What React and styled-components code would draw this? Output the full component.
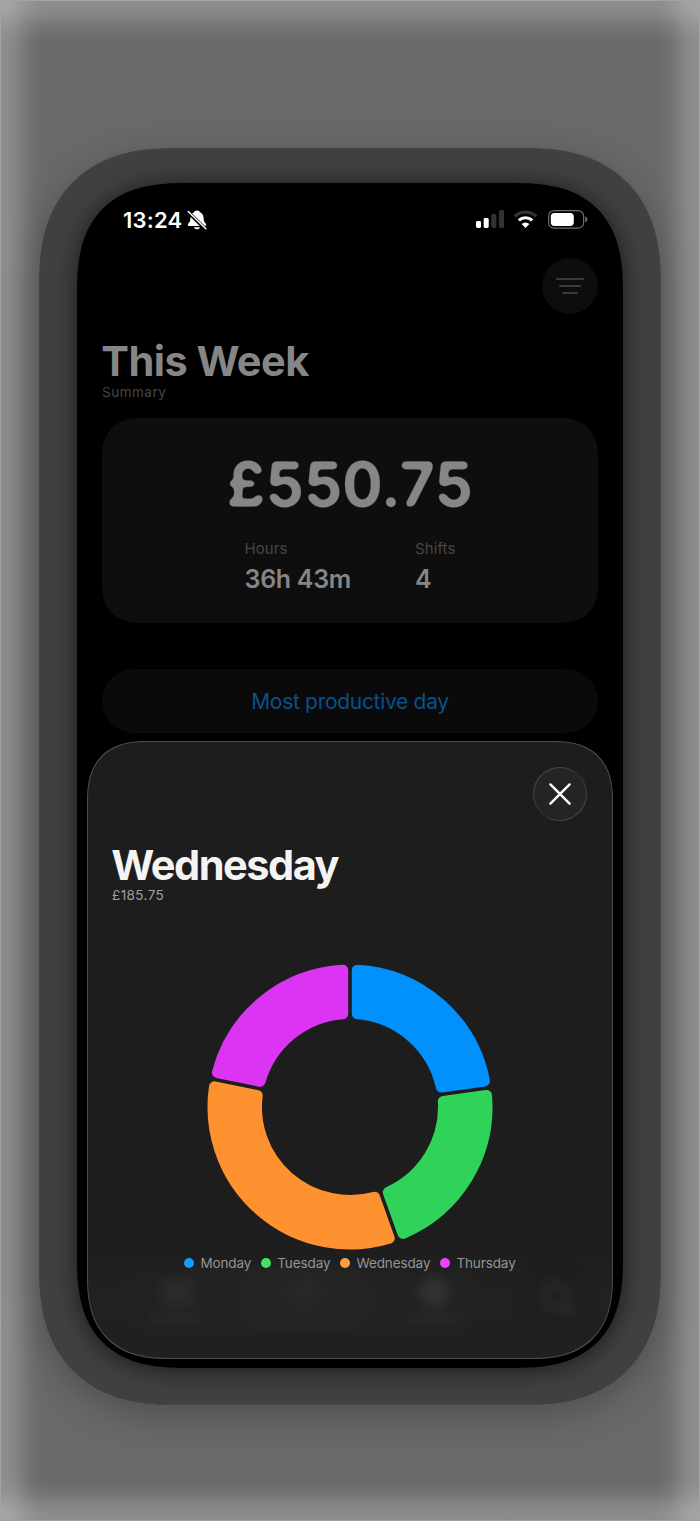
import React from 'react';
import styled, { createGlobalStyle } from 'styled-components';

const GlobalStyle = createGlobalStyle`
  * { box-sizing: border-box; }
  body {
    margin: 0;
    background: #696969;
    font-family: Inter, "Liberation Sans", sans-serif;
  }
`;

const glow = `rgba(255, 255, 255, 0.2) 0, rgba(255, 255, 255, 0.19) 8px,
  rgba(255, 255, 255, 0.16) 14px, rgba(255, 255, 255, 0.115) 20px,
  rgba(255, 255, 255, 0.07) 26px, rgba(255, 255, 255, 0.035) 32px,
  rgba(255, 255, 255, 0.012) 39px, rgba(255, 255, 255, 0) 48px`;

const Backdrop = styled.div`
  width: 700px;
  height: 1521px;
  padding: 147px 38.5px 0 38px;
  border: 1px solid #a3a3a3;
  box-shadow: inset 0 0 30px 16px rgba(255, 255, 255, 0.07);
  background:
    linear-gradient(to right, ${glow}),
    linear-gradient(to left, ${glow}),
    linear-gradient(to bottom, ${glow}),
    linear-gradient(to top, ${glow}),
    #696969;
`;

const Frame = styled.div`
  height: 1257px;
  padding: 34.5px 37.5px;
  border-radius: 112px;
  background: #404040;
  box-shadow: 0 10px 34px rgba(0, 0, 0, 0.25), inset 0 0 1px rgba(255, 255, 255, 0.3);
  @supports (corner-shape: squircle) {
    border-radius: 130px;
    corner-shape: superellipse(1.2);
  }
`;

const Screen = styled.div`
  display: flex;
  flex-direction: column;
  height: 1185.5px;
  border-radius: 84px;
  background: #000;
  box-shadow: 0 2px 22px 1px rgba(0, 0, 0, 0.55);
  @supports (corner-shape: squircle) {
    border-radius: 110px;
    corner-shape: superellipse(1.38);
  }
`;

const StatusBar = styled.div`
  display: flex;
  align-items: center;
  height: 74px;
  padding: 0 35.5px 0 46.5px;
`;

const Time = styled.span`
  margin-right: 5px;
  color: #fff;
  font-size: 22px;
  font-weight: 600;
  letter-spacing: 0.2px;
`;

const StatusIcons = styled.div`
  display: flex;
  align-items: center;
  margin: 0 0 1px auto;
  gap: 9.5px;
`;

const Nav = styled.div`
  display: flex;
  justify-content: flex-end;
  padding: 1px 25px 0;
`;

const FilterButton = styled.button`
  display: flex;
  align-items: center;
  justify-content: center;
  width: 56px;
  height: 56px;
  padding: 0;
  border: 0;
  border-radius: 50%;
  background: #0d0d0d;
`;

const Header = styled.div`
  padding: 22px 25.5px 0;
`;

const Title = styled.h1`
  margin: 0 0 0 -0.7px;
  font-size: 41.5px;
  line-height: 50px;
  font-weight: 700;
  letter-spacing: ${(p) => p.$spacing};
  color: ${(p) => p.$color};
`;

const Subtitle = styled.div`
  margin-top: -2px;
  font-size: 13.5px;
  line-height: 16px;
  letter-spacing: ${(p) => p.$spacing};
  color: ${(p) => p.$color};
`;

const Card = styled.div`
  display: flex;
  flex-direction: column;
  align-items: center;
  height: 205px;
  margin: 18px 25px 0 25.5px;
  padding-top: 32px;
  border-radius: 34px;
  background: #0e0e0f;
  @supports (corner-shape: squircle) {
    border-radius: 38px;
    corner-shape: superellipse(1.2);
  }
`;

// the filter rounds off the ends of the digits
const Amount = styled.div`
  font-size: 60.5px;
  line-height: 68px;
  font-weight: 600;
  letter-spacing: 0.5px;
  color: #868686;
  filter: url(#rounded);
`;

const FilterDefs = styled.svg`
  position: absolute;
`;

const Stats = styled.div`
  display: flex;
  gap: 64px;
  margin-top: 21.5px;
`;

const StatLabel = styled.div`
  font-size: 15px;
  line-height: 20px;
  letter-spacing: 0.1px;
  color: #464647;
`;

const StatValue = styled.div`
  margin-top: 4.5px;
  font-size: 25px;
  line-height: 30px;
  font-weight: 600;
  letter-spacing: -0.3px;
  color: #868686;
`;

const Pill = styled.button`
  height: 64px;
  margin: 46px 25px 0 25.5px;
  padding: 1px 0 0;
  border: 0;
  border-radius: 32px;
  background: #0a0a0a;
  font-family: inherit;
  font-size: 21px;
  letter-spacing: -0.3px;
  color: #07518d;
`;

const Sheet = styled.div`
  position: relative;
  display: flex;
  flex-direction: column;
  height: 618px;
  margin: 8px 10px 0 10.5px;
  padding: 25px 24px 0;
  border: 1px solid #4c4c4c;
  border-radius: 48px 48px 64px 64px;
  background: linear-gradient(#1d1d1d 0, #1d1d1d 500px, #212121 550px, #202020 100%);
  overflow: hidden;
  @supports (corner-shape: squircle) {
    border-radius: 60px 60px 82px 82px;
    corner-shape: superellipse(1.3);
  }
`;

const CloseButton = styled.button`
  position: relative;
  display: flex;
  align-items: center;
  justify-content: center;
  align-self: flex-end;
  width: 54px;
  height: 54px;
  margin-right: 1px;
  padding: 0;
  border: 1px solid transparent;
  border-radius: 50%;
  background:
    linear-gradient(#242426, #242426) padding-box,
    linear-gradient(135deg, #58585b, #343437 50%, #58585b) border-box;
`;

const SheetHeader = styled.div`
  position: relative;
  margin-top: 19px;
  ${Subtitle} { margin-top: -3px; }
`;

const Chart = styled.svg`
  position: relative;
  display: block;
  align-self: center;
  margin-top: 61px;
`;

const Legend = styled.div`
  position: relative;
  display: flex;
  justify-content: center;
  gap: 10px;
  margin-top: 4px;
`;

const LegendItem = styled.div`
  display: flex;
  align-items: center;
  gap: 6px;
  font-size: 13.5px;
  line-height: 18px;
  letter-spacing: -0.11px;
  color: #949496;
  &::before {
    content: '';
    width: 10px;
    height: 10px;
    border-radius: 50%;
    background: ${(p) => p.$color};
  }
`;

// tab bar of the page below, showing faintly through the sheet
const TabsBehind = styled.svg`
  position: absolute;
  left: 0;
  bottom: 0;
  filter: blur(5px);
`;

const days = [
  { name: 'Monday', color: '#0091ff', dot: '#149cff', from: 0, to: 82.1 },
  { name: 'Tuesday', color: '#30d359', dot: '#44e366', from: 82.1, to: 160.3 },
  { name: 'Wednesday', color: '#ff9230', dot: '#ffa03e', from: 160.3, to: 281.5 },
  { name: 'Thursday', color: '#db34f2', dot: '#ec44ff', from: 281.5, to: 360 },
];

const OUTER = 142.5;
const INNER = 88;
const CORNER = 5.5;
const GAP = 3.6;

function point(deg, side, r) {
  const a = (deg * Math.PI) / 180 + side * Math.asin((GAP / 2 + CORNER) / r);
  return `${(143 + r * Math.sin(a)).toFixed(2)} ${(143 - r * Math.cos(a)).toFixed(2)}`;
}

function sector({ from, to }) {
  const o = OUTER - CORNER;
  const i = INNER + CORNER;
  return `M${point(from, 1, o)}A${o} ${o} 0 0 1 ${point(to, -1, o)}L${point(to, -1, i)}A${i} ${i} 0 0 0 ${point(from, 1, i)}Z`;
}

function BellOff() {
  return (
    <svg width="20" height="20" viewBox="0 0 20 20">
      <path
        d="M10 .4C8.400.4 7.300 1.200 7 2.300 4.500 3.400 3.400 5.600 3.400 8.300c0 2.900-.6 3.700-1.900 5-1.100 1.100-.9 2.700.7 2.700h15.600c1.600 0 1.800-1.600.7-2.700-1.300-1.300-1.900-2.100-1.900-5 0-2.700-1.100-4.900-3.600-6C12.700 1.200 11.600.4 10 .4Z"
        fill="#fff"
      />
      <path d="M7 17.200h6c-.4 1.400-1.600 2.100-3 2.100s-2.600-.7-3-2.100Z" fill="#fff" />
      <path d="M.5 1.500 19 19.600" stroke="#000" strokeWidth="3.600" />
      <path d="M1.200 1.500 18.900 18.700" stroke="#fff" strokeWidth="1.500" strokeLinecap="round" />
    </svg>
  );
}

function Signal() {
  return (
    <svg width="28" height="18" viewBox="0 0 28 18">
      <rect x="0" y="11" width="5" height="7" rx="1.400" fill="#fff" />
      <rect x="7.700" y="8" width="5" height="10" rx="1.400" fill="#fff" />
      <rect x="15.300" y="4" width="5" height="14" rx="1.400" fill="#333" />
      <rect x="23" y="0" width="5" height="18" rx="1.400" fill="#333" />
    </svg>
  );
}

function Wifi() {
  return (
    <svg width="25" height="18" viewBox="0 0 25 18">
      <path d="M1.700 6.400a15.600 15.600 0 0 1 21.600 0" fill="none" stroke="#333" strokeWidth="3.300" />
      <path d="M5.800 10.400a9.800 9.800 0 0 1 13.400 0" fill="none" stroke="#fff" strokeWidth="3.200" />
      <path d="M12.500 18 8.600 14.100a5.700 5.700 0 0 1 7.800 0Z" fill="#fff" />
    </svg>
  );
}

function Battery() {
  return (
    <svg width="40" height="19" viewBox="0 0 40 19">
      <rect x=".6" y=".6" width="35" height="17.600" rx="5.500" fill="none" stroke="#6e6e6e" strokeWidth="1.200" />
      <rect x="2.800" y="2.900" width="23" height="13" rx="3.600" fill="#fff" />
      <path d="M37.300 6.500c1.200.4 1.900 1.500 1.900 2.900s-.7 2.500-1.900 2.900Z" fill="#7a7a7a" />
    </svg>
  );
}

export default function App() {
  return (
    <>
      <GlobalStyle />
      <FilterDefs width="0" height="0">
        <filter id="rounded" colorInterpolationFilters="sRGB">
          <feGaussianBlur stdDeviation="1.900" />
          <feComponentTransfer>
            <feFuncA type="linear" slope="5" intercept="-1.450" />
          </feComponentTransfer>
        </filter>
      </FilterDefs>
      <Backdrop>
        <Frame>
          <Screen>
            <StatusBar>
              <Time>13:24</Time>
              <BellOff />
              <StatusIcons>
                <Signal />
                <Wifi />
                <Battery />
              </StatusIcons>
            </StatusBar>
            <Nav>
              <FilterButton aria-label="Filter">
                <svg width="28" height="18" viewBox="0 0 28 18" stroke="#3b3b3b" strokeWidth="2" strokeLinecap="round">
                  <path d="M1 2h26M4 9h20M7 16h14" />
                </svg>
              </FilterButton>
            </Nav>
            <Header>
              <Title $color="#868686" $spacing="-0.55px">This Week</Title>
              <Subtitle $color="#464647" $spacing="0.5px">Summary</Subtitle>
            </Header>
            <Card>
              <Amount>£550.75</Amount>
              <Stats>
                <div>
                  <StatLabel>Hours</StatLabel>
                  <StatValue>36h 43m</StatValue>
                </div>
                <div>
                  <StatLabel>Shifts</StatLabel>
                  <StatValue>4</StatValue>
                </div>
              </Stats>
            </Card>
            <Pill>Most productive day</Pill>
            <Sheet>
              <TabsBehind width="524" height="110" viewBox="0 0 524 110">
                <g>
                  <rect x="28" y="14" width="370" height="72" rx="36" fill="#fff" opacity=".006" />
                  <rect x="150" y="16" width="136" height="68" rx="34" fill="#fff" opacity=".015" />
                  <circle cx="467" cy="50" r="36" fill="#000" opacity=".04" />
                  <rect x="74" y="30" width="32" height="28" rx="5" fill="#fff" opacity=".04" />
                  <rect x="62" y="68" width="52" height="6" fill="#fff" opacity=".04" />
                  <circle cx="217" cy="42" r="14" fill="#fff" opacity=".02" />
                  <circle cx="346" cy="44" r="15" fill="#fff" opacity=".07" />
                  <rect x="320" y="68" width="52" height="6" fill="#fff" opacity=".04" />
                  <circle cx="467" cy="48" r="12" fill="none" stroke="#fff" strokeWidth="6" opacity=".045" />
                  <path d="m476 57 10 10" stroke="#fff" strokeWidth="7" opacity=".05" />
                </g>
              </TabsBehind>
              <CloseButton aria-label="Close">
                <svg width="24" height="24" viewBox="0 0 24 24" stroke="#fff" strokeWidth="2.400" strokeLinecap="round">
                  <path d="m2.400 2.400 19.200 19.200M21.600 2.400 2.400 21.600" />
                </svg>
              </CloseButton>
              <SheetHeader>
                <Title $color="#f4f4f4" $spacing="-1.500px">Wednesday</Title>
                <Subtitle $color="#a0a0a2" $spacing="0.4px">£185.75</Subtitle>
              </SheetHeader>
              <Chart width="286" height="286" viewBox="0 0 286 286">
                {days.map((d) => (
                  <path key={d.name} d={sector(d)} fill={d.color} stroke={d.color} strokeWidth={CORNER * 2} strokeLinejoin="round" />
                ))}
              </Chart>
              <Legend>
                {days.map((d) => (
                  <LegendItem key={d.name} $color={d.dot}>{d.name}</LegendItem>
                ))}
              </Legend>
            </Sheet>
          </Screen>
        </Frame>
      </Backdrop>
    </>
  );
}
